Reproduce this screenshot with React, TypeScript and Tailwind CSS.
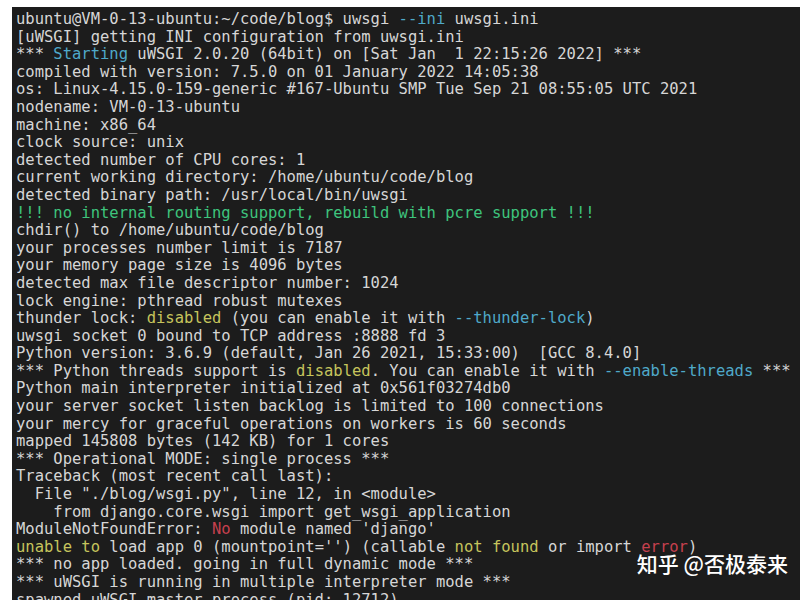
type Seg = { t: string; c?: string };

const CY = "text-[#4fa9c9]";
const GR = "text-[#3ec47d]";
const YE = "text-[#c6c45c]";
const RD = "text-[#c5404e]";

// each line is a list of coloured pieces, plain text where no colour given
const lines: Seg[][] = [
  [{ t: "ubuntu@VM-0-13-ubuntu:~/code/blog$ uwsgi " }, { t: "--ini", c: CY }, { t: " uwsgi.ini" }],
  [{ t: "[uWSGI] getting INI configuration from uwsgi.ini" }],
  [{ t: "*** " }, { t: "Starting", c: CY }, { t: " uWSGI 2.0.20 (64bit) on [Sat Jan  1 22:15:26 2022] ***" }],
  [{ t: "compiled with version: 7.5.0 on 01 January 2022 14:05:38" }],
  [{ t: "os: Linux-4.15.0-159-generic #167-Ubuntu SMP Tue Sep 21 08:55:05 UTC 2021" }],
  [{ t: "nodename: VM-0-13-ubuntu" }],
  [{ t: "machine: x86_64" }],
  [{ t: "clock source: unix" }],
  [{ t: "detected number of CPU cores: 1" }],
  [{ t: "current working directory: /home/ubuntu/code/blog" }],
  [{ t: "detected binary path: /usr/local/bin/uwsgi" }],
  [{ t: "!!! no internal routing support, rebuild with pcre support !!!", c: GR }],
  [{ t: "chdir() to /home/ubuntu/code/blog" }],
  [{ t: "your processes number limit is 7187" }],
  [{ t: "your memory page size is 4096 bytes" }],
  [{ t: "detected max file descriptor number: 1024" }],
  [{ t: "lock engine: pthread robust mutexes" }],
  [{ t: "thunder lock: " }, { t: "disabled", c: YE }, { t: " (you can enable it with " }, { t: "--thunder-lock", c: CY }, { t: ")" }],
  [{ t: "uwsgi socket 0 bound to TCP address :8888 fd 3" }],
  [{ t: "Python version: 3.6.9 (default, Jan 26 2021, 15:33:00)  [GCC 8.4.0]" }],
  [{ t: "*** Python threads support is " }, { t: "disabled", c: YE }, { t: ". You can enable it with " }, { t: "--enable-threads", c: CY }, { t: " ***" }],
  [{ t: "Python main interpreter initialized at 0x561f03274db0" }],
  [{ t: "your server socket listen backlog is limited to 100 connections" }],
  [{ t: "your mercy for graceful operations on workers is 60 seconds" }],
  [{ t: "mapped 145808 bytes (142 KB) for 1 cores" }],
  [{ t: "*** Operational MODE: single process ***" }],
  [{ t: "Traceback (most recent call last):" }],
  [{ t: '  File "./blog/wsgi.py", line 12, in <module>' }],
  [{ t: "    from django.core.wsgi import get_wsgi_application" }],
  [{ t: "ModuleNotFoundError: " }, { t: "No", c: RD }, { t: " module named 'django'" }],
  [{ t: "unable to", c: YE }, { t: " load app 0 (mountpoint='') (callable " }, { t: "not found", c: YE }, { t: " or import " }, { t: "error", c: RD }, { t: ")" }],
  [{ t: "*** no app loaded. going in full dynamic mode ***" }],
  [{ t: "*** uWSGI is running in multiple interpreter mode ***" }],
  [{ t: "spawned uWSGI master process (pid: 12712)" }],
];

export default function App() {
  return (
    <div className="w-[800px] h-[600px] overflow-hidden bg-white pt-[7px] pl-[12px]">
      <div className="relative h-full bg-[#1c1c1c] pl-[4px] pt-[4px] overflow-hidden">
        <div className="font-['DejaVu_Sans_Mono','Liberation_Mono',monospace] text-[15.5px] leading-[17.6px] text-[#d6d6d6] whitespace-pre">
          {lines.map((line, i) => (
            <div key={i}>
              {line.map((s, j) => (
                <span key={j} className={s.c}>
                  {s.t}
                </span>
              ))}
            </div>
          ))}
        </div>
        {/* zhihu watermark */}
        <div className="absolute top-[546px] right-[12px] font-['Noto_Sans_CJK_SC',sans-serif] text-[21px] leading-none font-medium text-white whitespace-nowrap">
          知乎 @否极泰来
        </div>
      </div>
    </div>
  );
}
